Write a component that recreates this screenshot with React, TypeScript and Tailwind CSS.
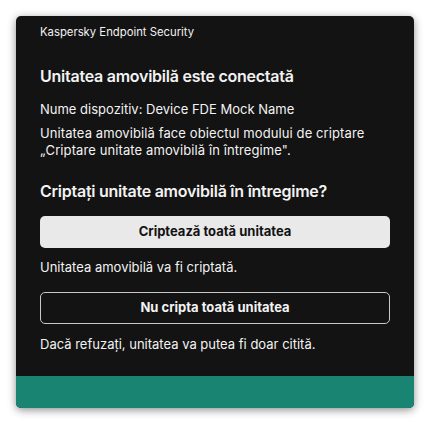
import React from "react";

const font = { fontFamily: "Inter, 'Noto Sans', sans-serif" };

export default function App() {
  return (
    <div className="w-[430px] h-[424px] bg-white p-4" style={font}>
      <div className="w-[398px] h-[392px] rounded-[5px] bg-[#131313] shadow-[0_2px_8px_rgba(0,0,0,0.45)] flex flex-col overflow-hidden">
        <div className="flex-1 px-6 pt-2 text-[#f2f2f2]">
          {/* Header */}
          <div className="text-[11.3px] leading-4 h-4">Kaspersky Endpoint Security</div>

          <h1 className="mt-6 text-[16px] leading-6 font-semibold tracking-[-0.25px]">
            Unitatea amovibilă este conectată
          </h1>

          <p className="mt-3 text-[13px] leading-[18px]">Nume dispozitiv: Device FDE Mock Name</p>

          <p className="mt-[7px] text-[13px] leading-[17px] tracking-[0.1px]">
            Unitatea amovibilă face obiectul modului de criptare
            <br />
            „Criptare unitate amovibilă în întregime".
          </p>

          <h2 className="mt-5 text-[16px] leading-6 font-semibold tracking-[-0.25px]">
            Criptați unitate amovibilă în întregime?
          </h2>

          {/* Encrypt all */}
          <button className="mt-[13px] w-full h-8 rounded-[5px] bg-[#e9e9e9] text-[#131313] text-[13px] font-bold">
            Criptează toată unitatea
          </button>
          <p className="mt-[10px] text-[13px] leading-[18px]">Unitatea amovibilă va fi criptată.</p>

          {/* Skip */}
          <button className="mt-4 w-full h-8 rounded-[5px] border border-[#c8c8c8] text-[#f2f2f2] text-[13px] font-bold">
            Nu cripta toată unitatea
          </button>
          <p className="mt-[11px] text-[13px] leading-[18px]">Dacă refuzați, unitatea va putea fi doar citită.</p>
        </div>

        {/* Footer strip */}
        <div className="h-8 bg-[#1a8473]" />
      </div>
    </div>
  );
}
